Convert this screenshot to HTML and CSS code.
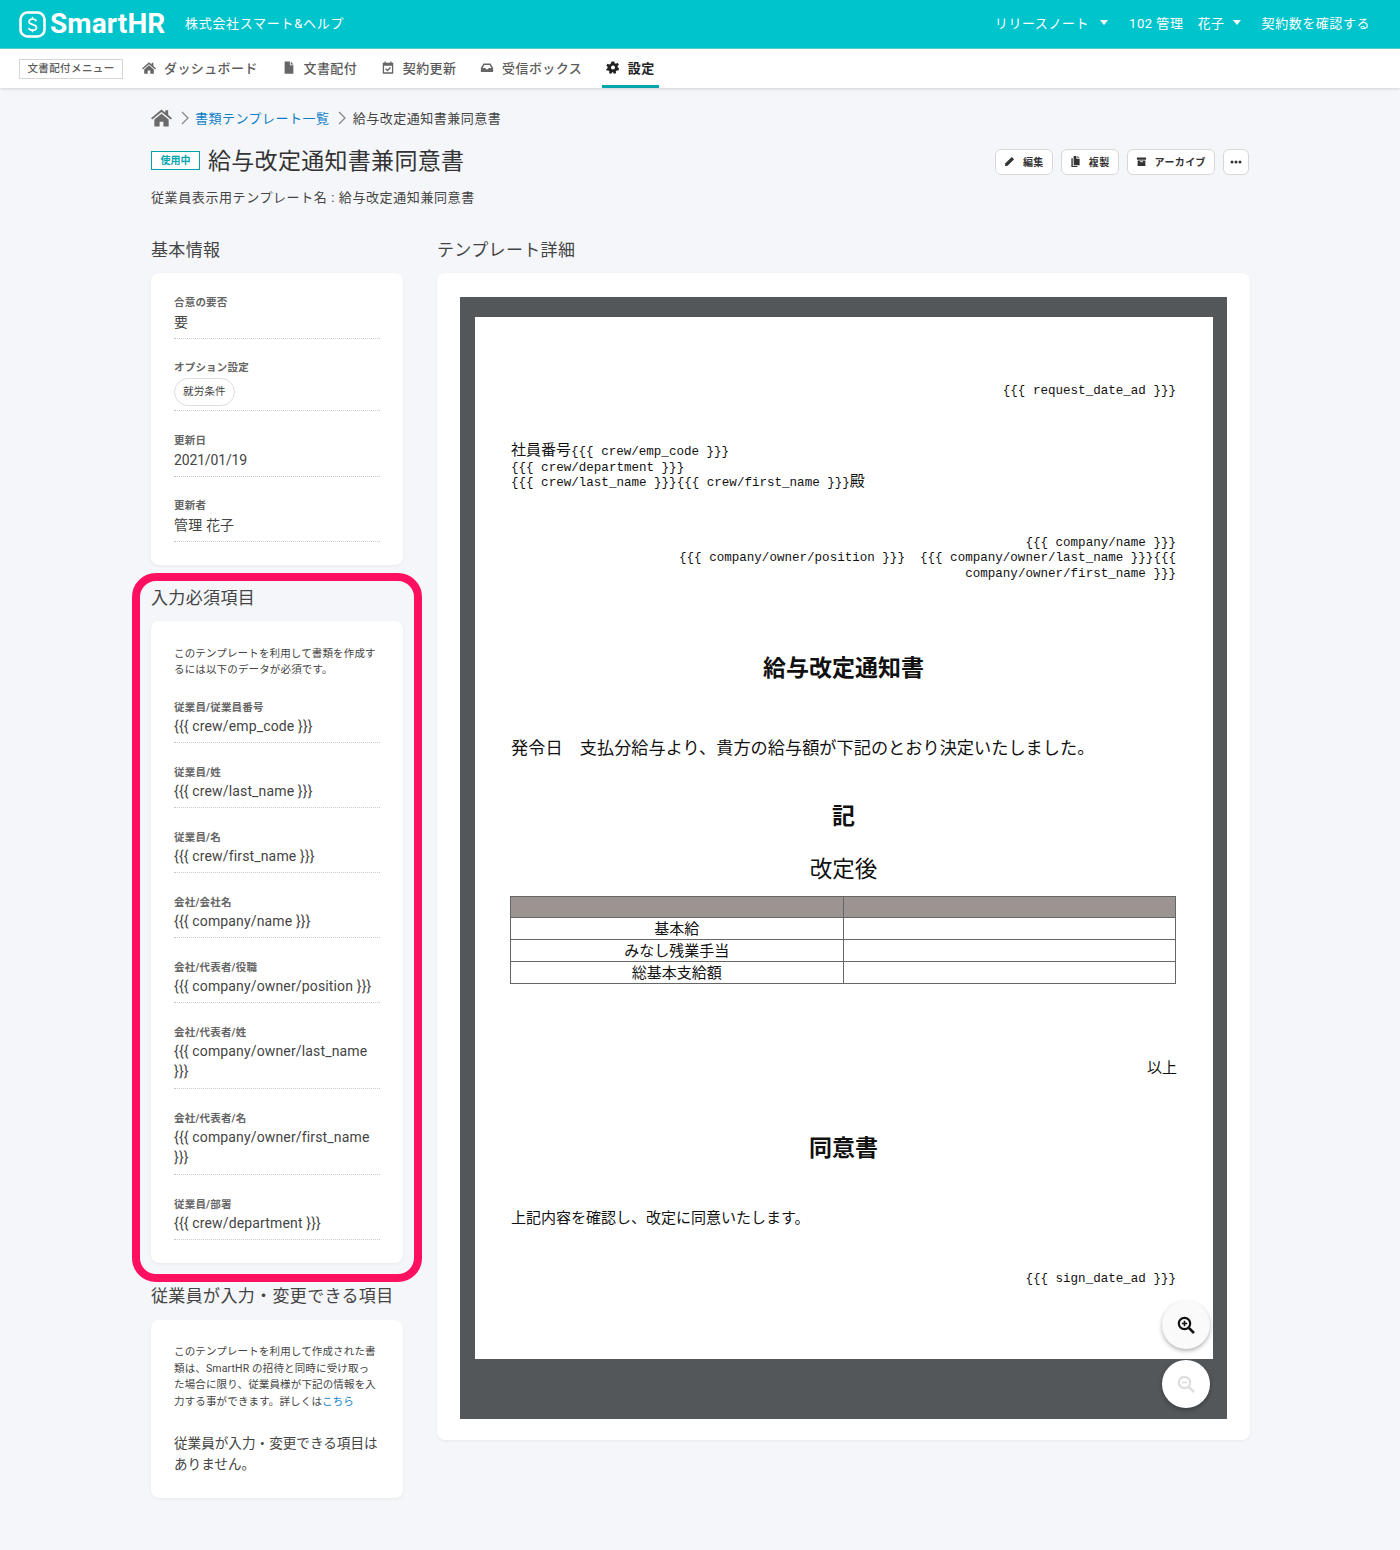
FILE: index.html
```html
<!DOCTYPE html>
<html lang="ja">
<head>
<meta charset="utf-8">
<title>給与改定通知書兼同意書</title>
<link rel="stylesheet" href="styles.css">
</head>
<body>
<header class="topbar">
  <div class="brand">
    <svg class="logo" viewBox="0 0 27 27"><rect x="1.5" y="1.5" width="24" height="24" rx="7" fill="none" stroke="#fff" stroke-width="2.6"/><path d="M17.3 10.300c-.5-1.500-1.900-2.300-3.700-2.300-2.100 0-3.600 1.100-3.600 2.800 0 3.700 7.500 2 7.500 5.600 0 1.700-1.700 2.800-3.900 2.800-1.900 0-3.400-.8-3.900-2.300" fill="none" stroke="#fff" stroke-width="1.700"/><path d="M13.500 5.800v2.500M13.500 18.800v2.500" stroke="#fff" stroke-width="1.400"/></svg>
    <span class="wordmark">SmartHR</span>
    <span class="company">株式会社スマート&amp;ヘルプ</span>
  </div>
  <nav class="topnav">
    <span class="topitem">リリースノート<i class="caret caret-wide"></i></span>
    <span class="topitem">102 管理<span class="firstname">花子</span><i class="caret"></i></span>
    <span class="topitem">契約数を確認する</span>
  </nav>
</header>
<nav class="subnav">
  <span class="menutag">文書配付メニュー</span>
  <a class="tab"><svg class="tabicon" viewBox="0 0 16 14"><path d="M8 1 0 8l1 1.200L8 3.200l7 6L16 8l-3-2.600V1.500h-2v2.200zM8 4.400 2.500 9.200V14h4v-3.500h3V14h4V9.200z" fill="#666"/></svg>ダッシュボード</a>
  <a class="tab"><svg class="tabicon" viewBox="0 0 16 14"><path d="M3 0h6v4.500h4V14H3zM10 0l3 3.500h-3z" fill="#666"/></svg>文書配付</a>
  <a class="tab"><svg class="tabicon" viewBox="0 0 16 14"><path d="M4 0h1.500v1.500h5V0H12v1.500h2V14H2V1.500h2zM3.500 5v7.500h9V5z" fill="#666"/><path d="m5.300 8.500 2 2 3.500-3.500" stroke="#666" stroke-width="1.500" fill="none"/></svg>契約更新</a>
  <a class="tab"><svg class="tabicon" viewBox="0 0 16 14"><path d="M4 2.500h8L15 7.500v4.500H1V7.500zM5 4 3 7.500h3l1 1.500h2l1-1.500h3L11 4z" fill="#666"/></svg>受信ボックス</a>
  <a class="tab tab-active"><svg class="tabicon" viewBox="0 0 16 14"><path fill-rule="evenodd" d="M6.500 0h3l.4 2 1.500.7 1.800-1.100 1.500 2.200-1.500 1.400.2 1.800 1.600.9-.8 2.600-1.900-.2-1.100 1.400.4 1.900-2.600.400-.9-1.500H7l-.9 1.500-2.600-.4.400-1.900-1.100-1.400-1.900.2L0 8.900l1.600-.9.200-1.800L.3 4.800l1.500-2.200 1.800 1.100L5.100 3zM8 4.700a2.300 2.300 0 1 0 0 4.600 2.300 2.300 0 0 0 0-4.600z" fill="#222"/></svg>設定</a>
</nav>
<main class="page">
  <div class="crumbs">
    <svg class="crumbhome" viewBox="0 0 22 18"><path d="M11 0 0 9.200l1.300 1.500L11 2.700l9.700 8 1.300-1.500-4-3.300V1h-3v2.400zM11 4.500 3.500 10.700V18H9v-5h4v5h5.500v-7.300z" fill="#6b6b6b"/></svg>
    <svg class="chev" viewBox="0 0 8 14"><path d="m1 1 6 6-6 6" fill="none" stroke="#888" stroke-width="1.300"/></svg>
    <a class="link">書類テンプレート一覧</a>
    <svg class="chev" viewBox="0 0 8 14"><path d="m1 1 6 6-6 6" fill="none" stroke="#888" stroke-width="1.300"/></svg>
    <span>給与改定通知書兼同意書</span>
  </div>
  <div class="titlerow">
    <span class="badge">使用中</span>
    <h1 class="title">給与改定通知書兼同意書</h1>
    <div class="actions">
      <button class="btn"><svg class="btnicon" viewBox="0 0 12 12"><path d="M8.500 1 11 3.500 4 10.500 1 11l.5-3z" fill="#333"/></svg>編集</button>
      <button class="btn"><svg class="btnicon" viewBox="0 0 12 12"><path d="M4 0h3v3h3.500v7H4zM8 0l2.500 2H8zM1.500 2.500H3V11h5v1H1.500z" fill="#333"/></svg>複製</button>
      <button class="btn"><svg class="btnicon" viewBox="0 0 12 12"><path d="M1 1.500h10v2.500H1zM1.800 4.800h8.400V11H1.800z" fill="#333"/><path d="M4.500 6.200h3" stroke="#fff"/></svg>アーカイブ</button>
      <button class="btn btn-more"><svg class="moreicon" viewBox="0 0 12 4"><circle cx="2" cy="2" r="1.500" fill="#333"/><circle cx="6" cy="2" r="1.500" fill="#333"/><circle cx="10" cy="2" r="1.500" fill="#333"/></svg></button>
    </div>
  </div>
  <p class="subtitle">従業員表示用テンプレート名 : 給与改定通知兼同意書</p>
  <div class="columns">
    <aside class="side">
      <section class="block">
        <h2 class="heading">基本情報</h2>
        <div class="card">
          <div class="item"><div class="label">合意の要否</div><div class="value">要</div></div>
          <div class="item item-chip"><div class="label">オプション設定</div><div class="chiprow"><span class="chip">就労条件</span></div></div>
          <div class="item"><div class="label">更新日</div><div class="value value-date">2021/01/19</div></div>
          <div class="item"><div class="label">更新者</div><div class="value">管理 花子</div></div>
        </div>
      </section>
      <section class="block marked">
        <div class="highlight"></div>
        <h2 class="heading">入力必須項目</h2>
        <div class="card card-required">
          <p class="note note-required">このテンプレートを利用して書類を作成するには以下のデータが必須です。</p>
          <div class="item"><div class="label">従業員/従業員番号</div><div class="value">{{{ crew/emp_code }}}</div></div>
          <div class="item"><div class="label">従業員/姓</div><div class="value">{{{ crew/last_name }}}</div></div>
          <div class="item"><div class="label">従業員/名</div><div class="value">{{{ crew/first_name }}}</div></div>
          <div class="item"><div class="label">会社/会社名</div><div class="value">{{{ company/name }}}</div></div>
          <div class="item"><div class="label">会社/代表者/役職</div><div class="value">{{{ company/owner/position }}}</div></div>
          <div class="item item-tall"><div class="label">会社/代表者/姓</div><div class="value">{{{ company/owner/last_name }}}</div></div>
          <div class="item item-tall"><div class="label">会社/代表者/名</div><div class="value">{{{ company/owner/first_name }}}</div></div>
          <div class="item"><div class="label">従業員/部署</div><div class="value">{{{ crew/department }}}</div></div>
        </div>
      </section>
      <section class="block">
        <h2 class="heading">従業員が入力・変更できる項目</h2>
        <div class="card card-editable">
          <p class="note">このテンプレートを利用して作成された書<br>類は、SmartHR の招待と同時に受け取っ<br>た場合に限り、従業員様が下記の情報を入<br>力する事ができます。詳しくは<a class="link">こちら</a></p>
          <p class="none">従業員が入力・変更できる項目はありません。</p>
        </div>
      </section>
    </aside>
    <section class="detail">
      <h2 class="heading">テンプレート詳細</h2>
      <div class="card card-doc">
        <div class="viewer">
          <article class="sheet">
            <p class="mono right date">{{{ request_date_ad }}}</p>
            <p class="mono addressee"><span class="kanji">社員番号</span>{{{ crew/emp_code }}}<br>{{{ crew/department }}}<br>{{{ crew/last_name }}}{{{ crew/first_name }}}<span class="kanji">殿</span></p>
            <p class="mono right owner">{{{ company/name }}}<br>{{{ company/owner/position }}}&nbsp;&nbsp;{{{ company/owner/last_name }}}{{{<br>company/owner/first_name }}}</p>
            <h3 class="doctitle notice">給与改定通知書</h3>
            <p class="lead">発令日　支払分給与より、貴方の給与額が下記のとおり決定いたしました。</p>
            <h3 class="doctitle ki">記</h3>
            <p class="after">改定後</p>
            <table class="pay">
              <tr class="payhead"><td></td><td></td></tr>
              <tr><td>基本給</td><td></td></tr>
              <tr><td>みなし残業手当</td><td></td></tr>
              <tr><td>総基本支給額</td><td></td></tr>
            </table>
            <p class="ijo">以上</p>
            <h3 class="doctitle consent">同意書</h3>
            <p class="agree">上記内容を確認し、改定に同意いたします。</p>
            <p class="mono right signdate">{{{ sign_date_ad }}}</p>
          </article>
          <button class="zoom zoom-in"><svg viewBox="0 0 18 18"><circle cx="7.500" cy="7.500" r="5.700" fill="none" stroke="#111" stroke-width="2.200"/><path d="M11.800 11.800 17 17" stroke="#111" stroke-width="2.600"/><path d="M4.800 7.500h5.400M7.500 4.800v5.400" stroke="#111" stroke-width="1.600"/></svg></button>
          <button class="zoom zoom-out"><svg viewBox="0 0 18 18"><circle cx="7.500" cy="7.500" r="5.700" fill="none" stroke="#ddd" stroke-width="2.200"/><path d="M11.800 11.800 17 17" stroke="#ddd" stroke-width="2.600"/><path d="M4.800 7.500h5.400" stroke="#ddd" stroke-width="1.600"/></svg></button>
        </div>
      </div>
    </section>
  </div>
</main>
</body>
</html>
```
FILE: styles.css
```css
* { box-sizing: border-box; }
html, body { margin: 0; padding: 0; }
body {
  height: 1550px;
  background: #f5f6fa;
  color: #333;
  font-family: Roboto, "Noto Sans CJK JP", sans-serif;
  overflow: hidden;
}
h1, h2, h3, p { margin: 0; font-weight: 400; }
.link { color: #0f7fc7; }

.topbar {
  height: 49px;
  background: #00c4cc;
  border-bottom: 1px solid #4fd5da;
  color: #fff;
  display: flex;
  justify-content: space-between;
  align-items: center;
  padding: 0 30px 0 19px;
}
.brand { display: flex; align-items: center; }
.logo { width: 27px; height: 27px; }
.wordmark { font-family: Roboto, sans-serif; font-weight: 700; font-size: 28px; line-height: 30px; margin-left: 4px; width: 135px; letter-spacing: .1px; }
.company { font-size: 13px; letter-spacing: .7px; padding-bottom: 3px; }
.topnav { display: flex; align-items: center; gap: 21px; font-size: 13px; letter-spacing: .55px; padding-bottom: 3px; }
.topitem { display: flex; align-items: center; }
.firstname { margin-left: 14px; }
.caret { width: 0; height: 0; border-left: 4.500px solid transparent; border-right: 4.500px solid transparent; border-top: 5px solid #fff; margin-left: 8px; }
.caret-wide { margin-left: 11px; }

.subnav {
  height: 39px;
  background: #fff;
  box-shadow: 0 1px 3px rgba(0,0,0,.15);
  display: flex;
  align-items: stretch;
  padding-left: 19px;
  font-size: 13px;
  letter-spacing: .4px;
  color: #5b5b5b;
  position: relative;
}
.menutag {
  align-self: center;
  height: 20px;
  width: 104px;
  border: 1px solid #d6d6d6;
  font-size: 10.500px;
  line-height: 18px;
  text-align: center;
  letter-spacing: .4px;
  margin-right: 15px;
  font-weight: 500;
}
.tab { display: flex; align-items: center; padding: 0 4px; margin-right: 15.700px; border-bottom: 3px solid transparent; font-weight: 500; }
.tabicon { width: 14px; height: 13px; margin-right: 8px; }
.tab-active { color: #222; border-bottom-color: #00a5ab; font-weight: 700; }

.page { width: 1098px; margin: 0 auto; padding-top: 19px; }
.crumbs { display: flex; align-items: center; height: 21px; font-size: 13px; letter-spacing: .5px; color: #444; }
.crumbhome { width: 21px; height: 18px; margin-right: 9px; }
.chev { width: 8px; height: 14px; margin-right: 6px; }
.link + .chev { margin-left: 8px; margin-right: 7px; }

.titlerow { display: flex; align-items: center; height: 30px; margin-top: 16px; }
.badge {
  width: 49px;
  height: 19px;
  border: 1px solid #00a5ab;
  background: #fff;
  color: #00a5ab;
  font-size: 10px;
  line-height: 17px;
  text-align: center;
  font-weight: 700;
  margin-right: 8px;
  margin-top: 2px;
}
.title { font-size: 23px; letter-spacing: .3px; color: #333; }
.actions { margin-left: auto; margin-top: 5px; display: flex; gap: 8px; }
.btn {
  height: 26px;
  padding: 0 8px;
  border: 1px solid #d8d8d8;
  border-radius: 6px;
  background: #fff;
  color: #333;
  font-family: inherit;
  font-size: 10px;
  font-weight: 700;
  letter-spacing: .4px;
  display: flex;
  align-items: center;
}
.btnicon { width: 11px; height: 11px; margin-right: 8px; }
.btn-more { padding: 0 6px; width: 26px; }
.moreicon { width: 12px; height: 4px; }
.subtitle { font-size: 13px; line-height: 20px; margin-top: 14px; color: #444; letter-spacing: .6px; }

.columns { display: flex; gap: 34px; margin-top: 30px; align-items: flex-start; }
.side { width: 252px; display: flex; flex-direction: column; gap: 21px; flex: none; }
.detail { flex: 1; }
.block { position: relative; }
.heading { font-size: 17px; line-height: 24px; letter-spacing: .35px; color: #444; }
.card { background: #fff; border-radius: 8px; box-shadow: 0 1px 3px rgba(0,0,0,.06); margin-top: 11px; padding: 22px 23px 2px; }
.item { border-bottom: 1px dotted #c8c8c8; padding-bottom: 6px; margin-bottom: 21px; }
.item-chip { margin-bottom: 22px; }
.item-tall { padding-bottom: 7px; }
.label { font-size: 10.500px; line-height: 16px; color: #666; font-weight: 700; letter-spacing: .2px; }
.value { font-size: 14px; line-height: 20px; margin-top: 1px; letter-spacing: .15px; color: #444; }
.value-date { letter-spacing: -.15px; }
.chiprow { margin-top: 2px; height: 28px; margin-bottom: -2px; }
.chip { display: inline-block; height: 28px; border: 1px solid #ddd; border-radius: 14px; padding: 0 8px; font-size: 10.500px; line-height: 26px; letter-spacing: .2px; color: #444; }
.highlight {
  position: absolute;
  left: -19px; right: -19px; top: -13px; bottom: -19px;
  border: 8px solid #ff0f5f;
  border-radius: 24px;
  pointer-events: none;
}
.note { font-size: 10.500px; line-height: 16.500px; color: #444; letter-spacing: .15px; }
.note-required { line-height: 16px; margin-bottom: 22px; }
.card-required { padding-top: 25px; padding-bottom: 1px; }
.card-required .value { margin-top: 0; }
.card-required .item { margin-bottom: 22px; }
.card-editable { padding-top: 24px; padding-bottom: 23px; margin-top: 12px; }
.none { font-size: 13.600px; line-height: 21px; margin-top: 23px; color: #444; }

.card-doc { padding: 24px 23px 21px; height: 1167px; position: relative; }
.viewer { height: 1122px; background: #53575a; padding: 20px 14px 0 15px; position: relative; overflow: hidden; }
.sheet { background: #fff; height: 1042px; padding: 67px 37px 0 36px; color: #111; font-family: "Liberation Serif", "Noto Sans CJK JP", serif; font-size: 15px; position: relative; }
.mono { font-family: "Liberation Mono", "Noto Sans CJK JP", monospace; font-size: 12.550px; line-height: 15.300px; }
.kanji { font-size: 15px; line-height: 0; font-family: "Noto Sans CJK JP", serif; }
.right { text-align: right; }
.addressee { margin-top: 46px; }
.owner { margin-top: 45px; }
.doctitle { font-weight: 700; font-size: 23px; line-height: 28px; text-align: center; font-family: "Noto Sans CJK JP", serif; }
.notice { margin-top: 70px; }
.lead { font-size: 17.200px; line-height: 24px; margin-top: 57px; }
.ki { margin-top: 39px; }
.after { font-size: 22.500px; line-height: 28px; text-align: center; margin-top: 28px; }
.pay { width: 666px; margin-left: -1px; border-collapse: collapse; margin-top: 12px; table-layout: fixed; }
.pay td { border: 1px solid #666; height: 22px; padding: 0; text-align: center; font-size: 15px; line-height: 20px; overflow: hidden; }
.pay .payhead td { height: 21px; background: #9c9490; }
.ijo { text-align: right; line-height: 20px; margin-top: 74px; margin-right: -1px; }
.consent { margin-top: 54px; }
.agree { line-height: 20px; margin-top: 48px; }
.signdate { margin-top: 44px; }
.zoom {
  position: absolute;
  left: 702px;
  width: 48px; height: 48px;
  border: 0;
  border-radius: 50%;
  background: #fafafa;
  box-shadow: 0 2px 4px rgba(0,0,0,.3);
  padding: 15px;
  display: block;
}
.zoom svg { width: 18px; height: 18px; display: block; }
.zoom-in { top: 1004px; }
.zoom-out { top: 1063px; background: #fff; }
```
